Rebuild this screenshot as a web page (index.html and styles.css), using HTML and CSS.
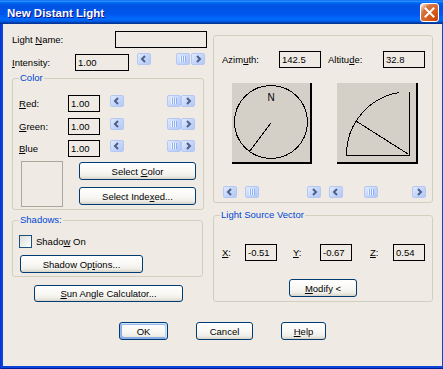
FILE: index.html
```html
<!DOCTYPE html>
<html>
<head>
<meta charset="utf-8">
<title>New Distant Light</title>
<link rel="stylesheet" href="styles.css">
</head>
<body>
<div class="window">
  <div class="titlebar">
    <span class="title">New Distant Light</span>
    <div class="close"><svg width="17" height="17" viewBox="0 0 17 17"><path d="M4.5 4.5 L12.5 12.5 M12.5 4.5 L4.5 12.5" stroke="#fff" stroke-width="2" stroke-linecap="square" fill="none"/></svg></div>
  </div>
  <div class="client">
    <div class="main">
      <div class="col-left">
        <div class="row row-name"><span class="lbl">Light <u>N</u>ame:</span><div class="field f-name"></div></div>
        <div class="row row-int">
          <span class="lbl w-int"><u>I</u>ntensity:</span><div class="field f-int">1.00</div>
          <div class="sb sb-int">
            <div class="sbtn"><svg width="14" height="12" viewBox="0 0 14 12"><polyline points="8,3 5,6 8,9" fill="none" stroke="#4d6185" stroke-width="2"/></svg></div>
            <div class="thumb" style="margin-left:25px"></div>
            <div class="sbtn sb-end"><svg width="14" height="12" viewBox="0 0 14 12"><polyline points="6,3 9,6 6,9" fill="none" stroke="#4d6185" stroke-width="2"/></svg></div>
          </div>
        </div>
        <div class="group g-color">
          <span class="gtitle">Color</span>
          <div class="row crow">
            <span class="lbl w-rgb"><u>R</u>ed:</span><div class="field f-rgb">1.00</div>
            <div class="sb sb-rgb">
              <div class="sbtn"><svg width="14" height="12" viewBox="0 0 14 12"><polyline points="8,3 5,6 8,9" fill="none" stroke="#4d6185" stroke-width="2"/></svg></div>
              <div class="thumb" style="margin-left:43px"></div>
              <div class="sbtn sb-end"><svg width="14" height="12" viewBox="0 0 14 12"><polyline points="6,3 9,6 6,9" fill="none" stroke="#4d6185" stroke-width="2"/></svg></div>
            </div>
          </div>
          <div class="row crow crow-g">
            <span class="lbl w-rgb"><u>G</u>reen:</span><div class="field f-rgb">1.00</div>
            <div class="sb sb-rgb">
              <div class="sbtn"><svg width="14" height="12" viewBox="0 0 14 12"><polyline points="8,3 5,6 8,9" fill="none" stroke="#4d6185" stroke-width="2"/></svg></div>
              <div class="thumb" style="margin-left:43px"></div>
              <div class="sbtn sb-end"><svg width="14" height="12" viewBox="0 0 14 12"><polyline points="6,3 9,6 6,9" fill="none" stroke="#4d6185" stroke-width="2"/></svg></div>
            </div>
          </div>
          <div class="row crow crow-b">
            <span class="lbl w-rgb"><u>B</u>lue</span><div class="field f-rgb">1.00</div>
            <div class="sb sb-rgb">
              <div class="sbtn"><svg width="14" height="12" viewBox="0 0 14 12"><polyline points="8,3 5,6 8,9" fill="none" stroke="#4d6185" stroke-width="2"/></svg></div>
              <div class="thumb" style="margin-left:43px"></div>
              <div class="sbtn sb-end"><svg width="14" height="12" viewBox="0 0 14 12"><polyline points="6,3 9,6 6,9" fill="none" stroke="#4d6185" stroke-width="2"/></svg></div>
            </div>
          </div>
          <div class="color-bottom">
            <div class="swatch"></div>
            <div class="color-btns">
              <div class="btn b-sel"><span>Select <u>C</u>olor</span></div>
              <div class="btn b-sel"><span>Select Inde<u>x</u>ed...</span></div>
            </div>
          </div>
        </div>
        <div class="group g-shadow">
          <span class="gtitle">Shadows:</span>
          <div class="chk-row"><div class="chk"></div><span class="chk-lbl">Shado<u>w</u> On</span></div>
          <div class="btn b-shopt"><span>Shadow Op<u>t</u>ions...</span></div>
        </div>
        <div class="btn b-sun"><span><u>S</u>un Angle Calculator...</span></div>
      </div>
      <div class="col-right">
        <div class="group g-angles">
          <div class="row">
            <span class="lbl w-az">Azim<u>u</u>th:</span><div class="field f-ang">142.5</div>
            <span class="lbl w-alt">Altitu<u>d</u>e:</span><div class="field f-ang">32.8</div>
          </div>
          <div class="pics">
            <div class="pic pic-az">
              <svg width="78" height="79" viewBox="0 0 78 79" shape-rendering="crispEdges">
                <circle cx="39" cy="39" r="36.5" fill="none" stroke="#000" stroke-width="1"/>
                <text x="39" y="18" font-family="Liberation Sans, Arial, sans-serif" font-size="10" text-anchor="middle" fill="#000">N</text>
                <line x1="39" y1="40" x2="17" y2="69" stroke="#000" stroke-width="1"/>
              </svg>
            </div>
            <div class="pic pic-alt">
              <svg width="79" height="79" viewBox="0 0 79 79" shape-rendering="crispEdges">
                <path d="M62 9.5 A63 63 0 0 0 9.5 72" fill="none" stroke="#000" stroke-width="1"/>
                <line x1="72.5" y1="9" x2="72.5" y2="72.5" stroke="#000" stroke-width="1"/>
                <line x1="9" y1="72.5" x2="72.5" y2="72.5" stroke="#000" stroke-width="1"/>
                <line x1="19" y1="38" x2="71" y2="71" stroke="#000" stroke-width="1"/>
              </svg>
            </div>
          </div>
          <div class="sbrow">
            <div class="sb sb-az">
              <div class="sbtn"><svg width="14" height="12" viewBox="0 0 14 12"><polyline points="8,3 5,6 8,9" fill="none" stroke="#4d6185" stroke-width="2"/></svg></div>
              <div class="thumb" style="margin-left:8px"></div>
              <div class="sbtn sb-end"><svg width="14" height="12" viewBox="0 0 14 12"><polyline points="6,3 9,6 6,9" fill="none" stroke="#4d6185" stroke-width="2"/></svg></div>
            </div>
            <div class="sb sb-alt">
              <div class="sbtn"><svg width="14" height="12" viewBox="0 0 14 12"><polyline points="8,3 5,6 8,9" fill="none" stroke="#4d6185" stroke-width="2"/></svg></div>
              <div class="thumb" style="margin-left:21px"></div>
              <div class="sbtn sb-end"><svg width="14" height="12" viewBox="0 0 14 12"><polyline points="6,3 9,6 6,9" fill="none" stroke="#4d6185" stroke-width="2"/></svg></div>
            </div>
          </div>
        </div>
        <div class="group g-lsv">
          <span class="gtitle">Light Source Vector</span>
          <div class="row">
            <span class="lbl w-x"><u>X</u>:</span><div class="field f-v">-0.51</div>
            <span class="lbl w-y"><u>Y</u>:</span><div class="field f-v">-0.67</div>
            <span class="lbl w-z"><u>Z</u>:</span><div class="field f-v">0.54</div>
          </div>
          <div class="btn b-mod"><span><u>M</u>odify &lt;</span></div>
        </div>
      </div>
    </div>
    <div class="footer">
      <div class="btn b-ok"><span>OK</span></div>
      <div class="btn b-cancel"><span>Cancel</span></div>
      <div class="btn b-help"><span><u>H</u>elp</span></div>
    </div>
  </div>
</div>
</body>
</html>
```
FILE: styles.css
```css
* { box-sizing: border-box; }
body {
  margin: 0;
  font-family: "Liberation Sans", Arial, sans-serif;
  font-size: 9.5px;
  color: #000;
  background: #efebe4;
}
u { text-decoration: underline; text-underline-offset: 1px; }

.window {
  width: 443px;
  height: 369px;
  display: flex;
  flex-direction: column;
  background: #0a45d8;
  box-shadow: inset 1px 0 #0831d9, inset 0 -1px #001e9c;
}
.titlebar {
  height: 24px;
  flex: none;
  display: flex;
  align-items: center;
  padding-left: 7px;
  background: linear-gradient(to bottom, #0058ee 0%, #3593ff 4%, #288eff 6%, #127dff 8%, #036ffc 10%, #0262ee 14%, #0057e5 20%, #0054e3 24%, #0055eb 56%, #005bf5 66%, #026afe 76%, #0062ef 86%, #0052d6 92%, #0040ab 94%, #003092 100%);
}
.title {
  color: #fff;
  font-weight: bold;
  font-size: 11.5px;
  text-shadow: 1px 1px #0f1089;
  padding-top: 2px;
}
.close {
  margin-left: auto;
  margin-right: 4px;
  width: 19px;
  height: 19px;
  border: 1px solid #fff;
  border-radius: 3px;
  background: radial-gradient(circle at 90% 90%, #cc4600 0%, #dc6527 55%, #cd7546 70%, #ffccb2 90%, #fff 100%);
  display: flex;
  align-items: center;
  justify-content: center;
}
.client {
  flex: 1;
  margin: 0 1px 3px 3px;
  background: #efebe4;
}
.main {
  display: flex;
  align-items: flex-start;
  padding: 7px 0 0 9px;
}
.col-left { width: 195px; flex: none; }
.col-right { width: 220px; flex: none; margin: 4px 0 0 6px; }

.row { display: flex; align-items: center; height: 17px; }
.lbl { white-space: nowrap; flex: none; }
.field {
  flex: none;
  height: 17px;
  border: 1px solid #000;
  padding-left: 2px;
  line-height: 15px;
  white-space: nowrap;
}
.f-name { width: 92px; margin-left: auto; }
.row-int { margin-top: 6px; }
.w-int { width: 63px; }
.f-int { width: 54px; }

.sb { display: flex; height: 12px; flex: none; align-self: flex-start; margin-top: -1px; }
.sb-int { width: 68px; margin-left: 8px; }
.sbtn {
  width: 14px;
  height: 12px;
  flex: none;
  border: 1px solid #b4c8f4;
  border-radius: 2px;
  background: linear-gradient(135deg, #e2eafe 0%, #c6d6fc 50%, #b4c9f6 100%);
  display: flex;
  align-items: center;
  justify-content: center;
}
.sbtn svg { display: block; margin: -1px; }
.sb-end { margin-left: auto; }
.thumb {
  width: 14px;
  height: 12px;
  flex: none;
  border: 1px solid #b4c8f4;
  border-radius: 2px;
  background:
    linear-gradient(90deg, transparent 3px, #eef4fe 3px 4px, #8cb0f8 4px 5px, #eef4fe 5px 6px, #8cb0f8 6px 7px, #eef4fe 7px 8px, #8cb0f8 8px 9px, transparent 9px) center / 12px 6px no-repeat,
    linear-gradient(135deg, #e2eafe 0%, #c6d6fc 50%, #b4c9f6 100%);
}

.group {
  position: relative;
  border: 1px solid #d0d0bf;
  border-radius: 3px;
}
.gtitle {
  position: absolute;
  top: -7px;
  left: 6px;
  padding: 0 1px;
  background: #efebe4;
  color: #0046d5;
  line-height: 12px;
  white-space: nowrap;
}
.g-color { margin-top: 7px; width: 192px; height: 132px; padding: 16px 0 0 6px; }
.w-rgb { width: 49px; }
.f-rgb { width: 32px; }
.sb-rgb { width: 85px; margin-left: 10px; margin-top: 0; }
.crow-g { margin-top: 6px; }
.crow-b { margin-top: 5px; }
.color-bottom { display: flex; align-items: flex-start; margin-top: 4px; }
.swatch { width: 42px; height: 46px; margin-left: 2px; border: 1px solid #aca899; }
.color-btns { display: flex; flex-direction: column; gap: 7px; margin: 1px 0 0 16px; }

.btn {
  height: 18px;
  flex: none;
  display: flex;
  align-items: center;
  justify-content: center;
  border: 1px solid #003c74;
  border-radius: 3px;
  background: linear-gradient(180deg, #ffffff 0%, #f8f7f3 55%, #efeee8 80%, #d8d3c8 100%);
  white-space: nowrap;
}
.b-sel { width: 117px; }

.g-shadow { margin-top: 10px; width: 191px; height: 57px; padding: 14px 0 0 6px; }
.chk-row { display: flex; align-items: center; height: 13px; }
.chk {
  width: 13px;
  height: 13px;
  border: 1px solid #1c5180;
  background: linear-gradient(135deg, #dcdcd7, #ffffff);
}
.chk-lbl { margin-left: 4px; }
.b-shopt { width: 123px; margin: 7px 0 0 1px; }
.b-sun { width: 149px; height: 17px; margin: 8px 0 0 22px; }

.g-angles { height: 168px; padding: 15px 0 0 8px; }
.w-az { width: 57px; }
.f-ang { width: 42px; }
.w-alt { width: 55px; margin-left: 7px; }
.pics { display: flex; margin-top: 15px; }
.pic {
  height: 81px;
  flex: none;
  background: #d4d0c8;
  border-right: 2px solid #000;
  border-bottom: 2px solid #000;
}
.pic svg { display: block; }
.pic-az { width: 80px; margin-left: 10px; }
.pic-alt { width: 81px; margin-left: 25px; }
.sbrow { display: flex; margin-top: 22px; }
.sbrow .sb { margin-top: 0; }
.sb-az { width: 98px; margin-left: 1px; }
.sb-alt { width: 97px; margin-left: 8px; }

.g-lsv { margin-top: 12px; height: 87px; padding: 28px 0 0 8px; }
.w-x { width: 23px; }
.f-v { width: 32px; }
.w-y { width: 27px; margin-left: 16px; }
.w-z { width: 23px; margin-left: 18px; }
.b-mod { width: 68px; margin: 18px 0 0 67px; }

.footer { display: flex; gap: 28px; margin-top: 20px; padding-left: 116px; }
.b-ok {
  width: 49px;
  box-shadow: inset -1px 1px #cee7ff, inset 1px 2px #98b8ea, inset -2px 2px #bcd4f6, inset 1px -1px #89ade4, inset 2px -2px #89ade4;
}
.b-cancel { width: 57px; }
.b-help { width: 45px; }
```
